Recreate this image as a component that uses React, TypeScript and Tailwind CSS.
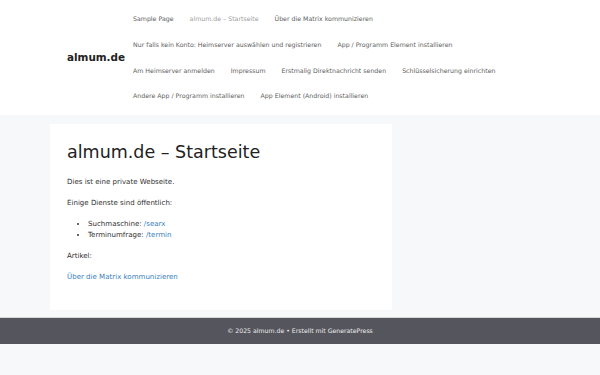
const navRows: string[][] = [
  ["Sample Page", "almum.de – Startseite", "Über die Matrix kommunizieren"],
  ["Nur falls kein Konto: Heimserver auswählen und registrieren", "App / Programm Element installieren"],
  ["Am Heimserver anmelden", "Impressum", "Erstmalig Direktnachricht senden", "Schlüsselsicherung einrichten"],
  ["Andere App / Programm installieren", "App Element (Android) installieren"],
];

export default function App() {
  return (
    <div className="min-h-[375px] bg-[#f7f8f9] font-['DejaVu_Sans',sans-serif] text-[#333333]">
      <header className="bg-white">
        <div className="mx-[50px] flex items-center py-[6px] pl-[17px]">
          <p className="w-[58px] text-[10.4px] font-bold text-[#222222]">almum.de</p>
          <nav className="flex flex-col">
            {navRows.map((row, i) => (
              <ul key={i} className="flex h-[25.7px] items-center">
                {row.map((item) => (
                  <li
                    key={item}
                    className={
                      "px-[8px] text-[6.25px] " +
                      (item === "almum.de – Startseite" ? "text-[#a0a0a0]" : "text-[#5e5e5e]")
                    }
                  >
                    {item}
                  </li>
                ))}
              </ul>
            ))}
          </nav>
        </div>
      </header>

      <main className="mx-[50px] pt-[9px]">
        <article className="w-[342px] bg-white px-[17px] pt-[17px] pb-[18px] text-[7.05px] leading-[11px]">
          <h1 className="text-[17.5px] leading-[22px] text-[#222222]">almum.de – Startseite</h1>
          <div className="mt-[13px]">
            <p className="mb-[10px]">Dies ist eine private Webseite.</p>
            <p className="mb-[10px]">Einige Dienste sind öffentlich:</p>
            <ul className="mb-[10px] ml-[21px] list-disc">
              <li>
                Suchmaschine: <a className="text-[#3a7fc0]">/searx</a>
              </li>
              <li>
                Terminumfrage: <a className="text-[#3a7fc0]">/termin</a>
              </li>
            </ul>
            <p className="mb-[10px]">Artikel:</p>
            <p className="mb-[10px]">
              <a className="text-[#3a7fc0]">Über die Matrix kommunizieren</a>
            </p>
          </div>
        </article>
      </main>

      <footer className="mt-[7px] border-t border-[#d7d7da] bg-[#55555e]">
        <p className="flex h-[26px] items-center justify-center text-[6.2px] text-[#ececec]">
          © 2025 almum.de • Erstellt mit GeneratePress
        </p>
      </footer>
    </div>
  );
}
